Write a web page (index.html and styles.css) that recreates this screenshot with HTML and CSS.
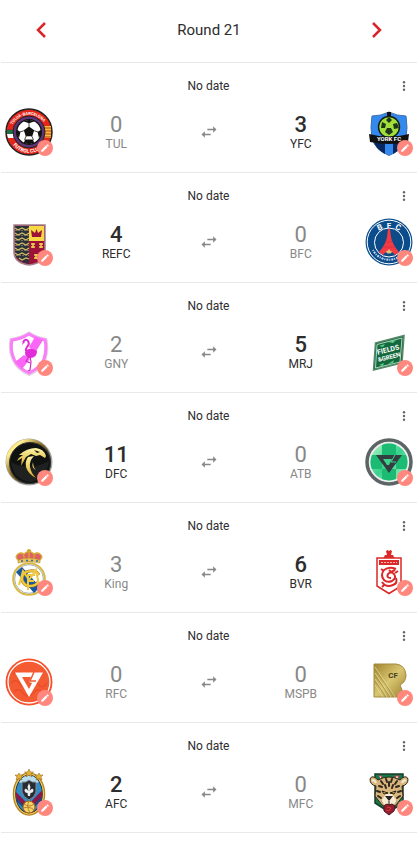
FILE: index.html
```html
<!DOCTYPE html>
<html lang="en">

<head>
    <meta charset="utf-8">
    <meta name="viewport" content="width=device-width, initial-scale=1">
    <title>Round 21</title>
    <link rel="stylesheet" href="styles.css">
</head>

<body>
    <!-- shared icons -->
    <svg class="sprite" aria-hidden="true">
        <symbol id="i-pen" viewBox="0 0 24 24">
            <path d="M3 17.2V21h3.800L17.800 9.900 14.100 6.200zM20.700 7a1 1 0 0 0 0-1.400l-2.300-2.300a1 1 0 0 0-1.400 0l-1.800 1.800 3.700 3.700z" />
        </symbol>
        <symbol id="i-more" viewBox="0 0 16 16">
            <circle cx="8" cy="4.300" r="1.200" />
            <circle cx="8" cy="8" r="1.200" />
            <circle cx="8" cy="11.700" r="1.200" />
        </symbol>
        <symbol id="i-swap" viewBox="0 0 24 24">
            <path d="M7 11 3 15l4 4v-3h7v-2H7zM21 9l-4-4v3h-7v2h7v3z" />
        </symbol>
        <symbol id="i-ball" viewBox="0 0 20 20">
            <circle cx="10" cy="10" r="9.500" fill="#fff" stroke="#111" />
            <path d="M10 5.800l4 2.900-1.500 4.600h-5L6 8.700zM5.500 1.800 10 3.200l4.500-1.400L10 .5zM.6 8l2.800 2-1 4.500L.6 12zM19.400 8l-2.800 2 1 4.500 1.800-2.500zM6 18.500l1-2.700h6l1 2.700-4 1z" fill="#111" />
            <path d="M10 6V3M6 9 3 10M14 9l3 1M8 13l-1.500 3M12 13l1.500 3" stroke="#333" stroke-width=".7" />
        </symbol>
    </svg>

    <main class="fixtures">
        <header class="round-nav">
            <button type="button" class="nav-btn" aria-label="Previous round">
                <svg viewBox="0 0 24 24"><path d="M16 5 9 12l7 7" /></svg>
            </button>
            <h1 class="round-title">Round 21</h1>
            <button type="button" class="nav-btn" aria-label="Next round">
                <svg viewBox="0 0 24 24"><path d="M8 5l7 7-7 7" /></svg>
            </button>
        </header>

        <section class="match">
            <div class="match-head">
                <span class="match-date">No date</span>
                <button type="button" class="more-btn" aria-label="Options"><svg><use href="#i-more" /></svg></button>
            </div>
            <div class="match-row">
                <button type="button" class="crest" aria-label="Edit TUL">
                    <svg class="logo" viewBox="0 0 48 48">
                        <circle cx="24" cy="24" r="23" fill="#e62518" stroke="#222" stroke-width="1.500" />
                        <path d="M2 21h9v3H2z" fill="#b32622" /><path d="M2 22h9v4H2z" fill="#187245" /><path d="M2 26h10v4H3z" fill="#fff" />
                        <path d="M37 18h9v12h-9z" fill="#f5bf35" />
                        <path d="M38 20h8M38 23h8M38 26h8M38 29h8" stroke="#c73525" />
                        <circle cx="24" cy="24" r="16" fill="#5d3475" stroke="#222" />
                        <use href="#i-ball" x="11" y="11" width="26" height="26" />
                        <path id="tul-top" d="M6 21a18.500 18.500 0 0 1 36 0" fill="none" />
                        <path id="tul-bottom" d="M5 32a20.500 20.500 0 0 0 38 0" fill="none" />
                        <text class="ring-text" font-size="4"><textPath href="#tul-top" startOffset="9%">TULUA-BARCELONA</textPath></text>
                        <text class="ring-text" font-size="5"><textPath href="#tul-bottom" startOffset="12%">FUTBOL CLUB</textPath></text>
                    </svg>
                    <span class="edit"><svg><use href="#i-pen" /></svg></span>
                </button>
                <div class="team"><span class="score">0</span><span class="name">TUL</span></div>
                <svg class="swap"><use href="#i-swap" /></svg>
                <div class="team win"><span class="score">3</span><span class="name">YFC</span></div>
                <button type="button" class="crest" aria-label="Edit YFC">
                    <svg class="logo" viewBox="0 0 48 48">
                        <path d="M7 8q9 0 17-4 8 4 17 4 2 12 0 22-3 12-17 17.500Q10 42 7 30 5 20 7 8z" fill="#3489ee" stroke="#3d6fae" />
                        <path d="M8 31l12-1v16Q10 41 8 31zM28 30l12 1q-2 10-12 15z" fill="#092761" />
                        <path d="M22 4h4v6h-4z" fill="#111" />
                        <circle cx="24" cy="19" r="10.500" fill="#a3df3b" stroke="#172018" stroke-width="1.500" />
                        <path d="M24 9l3 3-3 3-3-3zM17 14l4 2-1 4-4 0zM28 16l4-1 2 5-5 1zM22 20h4l2 4-4 3-4-3z" fill="#1d3719" />
                        <path d="M4 26q20 5 40 0l-1 8q-19 4-38 0z" fill="#111" />
                        <text x="24" y="33" class="mark" font-size="6" fill="#fff">YORK FC</text>
                    </svg>
                    <span class="edit"><svg><use href="#i-pen" /></svg></span>
                </button>
            </div>
        </section>

        <section class="match">
            <div class="match-head">
                <span class="match-date">No date</span>
                <button type="button" class="more-btn" aria-label="Options"><svg><use href="#i-more" /></svg></button>
            </div>
            <div class="match-row">
                <button type="button" class="crest" aria-label="Edit REFC">
                    <svg class="logo" viewBox="0 0 48 48">
                        <path d="M9 7h31v27q0 11-16 13Q9 45 9 34z" fill="#9c1238" stroke="#a5808c" stroke-width="1.500" />
                        <path d="M24 8h15v15H24z" fill="#f8d943" />
                        <path d="M10 8h14v38q-14-3-14-12z" fill="#293238" />
                        <path d="M10 10l3 2 4-2 4 2 3-2M10 15l3 2 4-2 4 2 3-2M10 20l3 2 4-2 4 2 3-2M10 25l3 2 4-2 4 2 3-2M10 30l3 2 4-2 4 2 3-2M10 35l3 2 4-2 4 2 3-2M14 40l3 2 4-2 3 1" fill="none" stroke="#d3bb68" stroke-width="1.300" />
                        <path d="M10 12.500h14M10 17.500h14M10 22.500h14M10 27.500h14M10 32.500h14M11 37.500h13" stroke="#8c8064" stroke-dasharray="2 1" stroke-width=".8" />
                        <path d="M27 19l-1-7 4 3 1.500-4 1.500 4 4-3-1 7z" fill="#9c1238" />
                        <path d="M26 26h4M28 25v5M26 29h4M34 26h4M36 25v5M34 29h4M29 37h4M31 36v5M29 40h4" stroke="#eed54a" stroke-width="1.500" />
                    </svg>
                    <span class="edit"><svg><use href="#i-pen" /></svg></span>
                </button>
                <div class="team win"><span class="score">4</span><span class="name">REFC</span></div>
                <svg class="swap"><use href="#i-swap" /></svg>
                <div class="team"><span class="score">0</span><span class="name">BFC</span></div>
                <button type="button" class="crest" aria-label="Edit BFC">
                    <svg class="logo" viewBox="0 0 48 48">
                        <circle cx="24" cy="24" r="23.500" fill="#0b4d8c" />
                        <circle cx="24" cy="24" r="21.800" fill="none" stroke="#fff" />
                        <circle cx="24" cy="24.500" r="14.500" fill="#0c4b88" stroke="#fff" />
                        <path d="M23 11h2l1 8q1 7 8 15l-4 3q-6-8-12 0l-4-3q7-8 8-15z" fill="#f43b45" />
                        <path d="M20 24h8M18 29h12" stroke="#d93045" />
                        <path d="M24 31l1.500 2 2 .5-2 2h-3l-2-2 2-.5z" fill="#e3c277" />
                        <text x="15" y="12" class="mark" font-size="8" fill="#fff" transform="rotate(-24 15 10)">B</text>
                        <text x="24" y="9.500" class="mark" font-size="8" fill="#fff">F</text>
                        <text x="33" y="12" class="mark" font-size="8" fill="#fff" transform="rotate(24 33 10)">C</text>
                        <path d="M8 32a18 18 0 0 0 32 0" fill="none" stroke="#cbd9ec" stroke-width="2" stroke-dasharray="1 1 2 1" />
                    </svg>
                    <span class="edit"><svg><use href="#i-pen" /></svg></span>
                </button>
            </div>
        </section>

        <section class="match">
            <div class="match-head">
                <span class="match-date">No date</span>
                <button type="button" class="more-btn" aria-label="Options"><svg><use href="#i-more" /></svg></button>
            </div>
            <div class="match-row">
                <button type="button" class="crest" aria-label="Edit GNY">
                    <svg class="logo" viewBox="0 0 48 48">
                        <path d="M24 5q8 5 17 6.500 2 10-1 20-4 10-16 15Q12 41 8 31.500 4 22 6 11.500 16 10 24 5z" fill="#fff" stroke="#e3cfe3" stroke-width="3" />
                        <path d="M24 6q8 5 16 6 2 9-1 19-4 9-15 14Q13 40 9 31 5 22 7 12q9-1 17-6z" fill="#fff" stroke="#fb7df8" stroke-width="3" />
                        <path d="M30 9l8 3-8 13-6-6zM19 27l6 4-8 10-7-7z" fill="#fa66f5" />
                        <path d="M18 14q3-4 5-1 2 3-1 6-3 4 2 6" fill="none" stroke="#e22bd9" stroke-width="2" />
                        <path d="M18 13l-1 4 3-3zM20 24q4-6 12-1 0 7-7 7-5 0-5-6z" fill="#e22bd9" />
                        <path d="M25 28l1 6-1 8-2 1M24 29l-3 4 4 2" fill="none" stroke="#d32bc9" stroke-width="1.200" />
                    </svg>
                    <span class="edit"><svg><use href="#i-pen" /></svg></span>
                </button>
                <div class="team"><span class="score">2</span><span class="name">GNY</span></div>
                <svg class="swap"><use href="#i-swap" /></svg>
                <div class="team win"><span class="score">5</span><span class="name">MRJ</span></div>
                <button type="button" class="crest" aria-label="Edit MRJ">
                    <svg class="logo" viewBox="0 0 48 48">
                        <path d="M10.500 15 39 7.500 37 35 8.500 42z" fill="#13683d" stroke="#568968" stroke-width="1.500" />
                        <path d="M12 16.500l25-6.500-2 24-24.500 6z" fill="none" stroke="#d7eee0" stroke-width=".8" />
                        <path d="M14 18l6-2-2 3M23 14l8-2-3 3zM14 37l5-2-1 3zM23 36l6-4-1 3z" fill="#5bcf85" />
                        <g transform="rotate(-14 24 25)">
                            <text x="24" y="24" class="mark" font-size="7" fill="#fff">FIELDS</text>
                            <text x="23" y="31" class="mark" font-size="6" fill="#fff">&amp;GREEN</text>
                        </g>
                    </svg>
                    <span class="edit"><svg><use href="#i-pen" /></svg></span>
                </button>
            </div>
        </section>

        <section class="match">
            <div class="match-head">
                <span class="match-date">No date</span>
                <button type="button" class="more-btn" aria-label="Options"><svg><use href="#i-more" /></svg></button>
            </div>
            <div class="match-row">
                <button type="button" class="crest" aria-label="Edit DFC">
                    <svg class="logo" viewBox="0 0 48 48">
                        <defs>
                            <linearGradient id="rim" x1="0" y1="0" x2="1" y2="1">
                                <stop offset="0" stop-color="#e9bd25" /><stop offset=".2" stop-color="#ffef93" /><stop offset=".45" stop-color="#8a6a1c" /><stop offset=".7" stop-color="#333" /><stop offset="1" stop-color="#e0cc77" />
                            </linearGradient>
                            <linearGradient id="gold" x1="0" y1="0" x2="0" y2="1">
                                <stop offset="0" stop-color="#fff6a8" /><stop offset="1" stop-color="#d8a923" />
                            </linearGradient>
                        </defs>
                        <circle cx="24" cy="24" r="23.500" fill="#a6a6a2" />
                        <circle cx="23.500" cy="23.500" r="22.500" fill="url(#rim)" />
                        <circle cx="25" cy="25" r="20.500" fill="#101111" stroke="#333" />
                        <path d="M6 24q18 10 38-1-2 17-18 21Q8 42 6 24z" fill="#292b2c" opacity=".6" />
                        <path d="M14 17q8-7 17-7 8 1 10 8l-1 2-5-3-4 1-5-2-5 3-5 9 1-8-5 3q2-4 6-6z" fill="url(#gold)" />
                        <path d="M23 19l6-1q-5 5-4 11 1 6 6 11-8-4-10-11-1-6 2-10zM28 24q0 5 3 8-5-2-3-8z" fill="url(#gold)" />
                        <path d="M29 12l6 2-3 1z" fill="#111" />
                    </svg>
                    <span class="edit"><svg><use href="#i-pen" /></svg></span>
                </button>
                <div class="team win"><span class="score">11</span><span class="name">DFC</span></div>
                <svg class="swap"><use href="#i-swap" /></svg>
                <div class="team"><span class="score">0</span><span class="name">ATB</span></div>
                <button type="button" class="crest" aria-label="Edit ATB">
                    <svg class="logo" viewBox="0 0 48 48">
                        <defs>
                            <clipPath id="atb-clip"><circle cx="24" cy="24" r="18.500" /></clipPath>
                            <linearGradient id="mint" x1="0" y1="0" x2="1" y2="1">
                                <stop offset="0" stop-color="#c5f7cd" /><stop offset=".5" stop-color="#38d28c" /><stop offset="1" stop-color="#b7f4cb" />
                            </linearGradient>
                        </defs>
                        <circle cx="24" cy="24" r="22" fill="#eee" stroke="#5d6466" stroke-width="3.500" />
                        <g clip-path="url(#atb-clip)">
                            <path d="M4 4h40v40H4z" fill="url(#mint)" />
                            <path d="M17 4h14v13H17zM4 17h13v14H4zM31 17h13v14H31zM17 31h14v13H17z" fill="#1cbb74" />
                        </g>
                        <path d="M11 17h26L24 35z" fill="#343d40" />
                        <path d="M18 21h9l-3 6-2 0z" fill="#3fd28e" />
                        <path d="M30 17l-4 7h5" fill="none" stroke="#3fd28e" />
                    </svg>
                    <span class="edit"><svg><use href="#i-pen" /></svg></span>
                </button>
            </div>
        </section>

        <section class="match">
            <div class="match-head">
                <span class="match-date">No date</span>
                <button type="button" class="more-btn" aria-label="Options"><svg><use href="#i-more" /></svg></button>
            </div>
            <div class="match-row">
                <button type="button" class="crest" aria-label="Edit King">
                    <svg class="logo" viewBox="0 0 48 48">
                        <circle cx="24" cy="31" r="15.800" fill="#fff" stroke="#d9b743" stroke-width="2" />
                        <circle cx="24" cy="31" r="14.300" fill="none" stroke="#6e8a91" stroke-width=".6" />
                        <path d="M11 24l6-5 18 20-6 6z" fill="#1757a0" />
                        <path d="M34 27q-3-5-9-4-8 1-8 8 1 7 8 7 6 0 8-4" fill="none" stroke="#9a7a20" stroke-width="3" />
                        <path d="M34 27q-3-5-9-4-8 1-8 8 1 7 8 7 6 0 8-4M14 37l4-14 6 9 7-10 3 15M23 42V27h7M23 33h6" fill="none" stroke="#efc83e" stroke-width="2" />
                        <path d="M14 13q-5-4-1-7 3-2 6 0 5-5 10 0 3-2 6 0 4 3-1 7z" fill="#e0606a" stroke="#d6ad35" stroke-width="1.500" />
                        <path d="M24 1v4M22 2.500h4M24 5v8M18 6l2 6M30 6l-2 6" stroke="#d3a32c" stroke-width="1.500" />
                        <path d="M13 12q11-4 22 0v3q-11-3-22 0z" fill="#ecc552" stroke="#aa7d2b" stroke-width=".5" />
                        <path d="M16 13h2M21 12.500h2M26 12.500h2M31 13h2" stroke="#316fac" stroke-width="1.500" />
                    </svg>
                    <span class="edit"><svg><use href="#i-pen" /></svg></span>
                </button>
                <div class="team"><span class="score">3</span><span class="name">King</span></div>
                <svg class="swap"><use href="#i-swap" /></svg>
                <div class="team win"><span class="score">6</span><span class="name">BVR</span></div>
                <button type="button" class="crest" aria-label="Edit BVR">
                    <svg class="logo" viewBox="0 0 48 48">
                        <path d="M21 3l1.500-1 1.500 1 1.500-1L27 3l-1 4h-4zM20 7h8l2 4H18z" fill="#db2828" />
                        <path d="M12 10h24v28l-12 7.500L12 38z" fill="#fff" stroke="#db2828" stroke-width="1.500" />
                        <path d="M14 12h20v5H14z" fill="#db2828" />
                        <path d="M16 14.500h16" stroke="#ffb6a4" stroke-dasharray="2 1" />
                        <path d="M31 21q-7-3-12 1-4 5 0 10 3 3 8 1 5-3 2-7-3-3-6 0-2 4 3 4M17 34q4 6 11 3 5-2 3-7M19 23l-3-2M30 25l3-2M20 36l-3 3M24 22l2 2 4-2" fill="none" stroke="#db2828" stroke-width="2" />
                    </svg>
                    <span class="edit"><svg><use href="#i-pen" /></svg></span>
                </button>
            </div>
        </section>

        <section class="match">
            <div class="match-head">
                <span class="match-date">No date</span>
                <button type="button" class="more-btn" aria-label="Options"><svg><use href="#i-more" /></svg></button>
            </div>
            <div class="match-row">
                <button type="button" class="crest" aria-label="Edit RFC">
                    <svg class="logo" viewBox="0 0 48 48">
                        <circle cx="24" cy="24" r="23.500" fill="#f4512c" />
                        <circle cx="24" cy="24" r="21" fill="#f45b32" stroke="#fff" stroke-width="1.300" />
                        <path d="M6 25q5-5 9 1t9 0 9 0 9-1M9 34q5-5 9 1t10 0 8-1M8 16q5-4 9 0" fill="none" stroke="#e54826" stroke-width="1.500" opacity=".7" />
                        <path d="M10 14.500h28L24 39z" fill="#fff" />
                        <path d="M17 19h9l-2 5 3 1-3 6z" fill="#f45b32" />
                        <path d="M29 14l-4 9h6" fill="none" stroke="#f45b32" stroke-width="1.500" />
                    </svg>
                    <span class="edit"><svg><use href="#i-pen" /></svg></span>
                </button>
                <div class="team"><span class="score">0</span><span class="name">RFC</span></div>
                <svg class="swap"><use href="#i-swap" /></svg>
                <div class="team"><span class="score">0</span><span class="name">MSPB</span></div>
                <button type="button" class="crest" aria-label="Edit MSPB">
                    <svg class="logo" viewBox="0 0 48 48">
                        <defs>
                            <linearGradient id="brass" x1="0" y1="0" x2="1" y2="1">
                                <stop offset="0" stop-color="#a2842f" /><stop offset=".5" stop-color="#d9c671" /><stop offset="1" stop-color="#9c8030" />
                            </linearGradient>
                        </defs>
                        <path d="M9 6h22q9 1 10 11 0 7-6 10l5 12H9z" fill="url(#brass)" stroke="#a48b3d" />
                        <path d="M10 9l20 30M10 15l16 24M10 21l12 18M10 27l8 12" stroke="#e6d992" stroke-width=".8" />
                        <path d="M10 11l19 28M10 17l15 22M10 23l11 16" stroke="#9a863e" stroke-width=".7" />
                        <text x="28" y="20" class="mark" font-size="8" fill="#463e20">CF</text>
                    </svg>
                    <span class="edit"><svg><use href="#i-pen" /></svg></span>
                </button>
            </div>
        </section>

        <section class="match">
            <div class="match-head">
                <span class="match-date">No date</span>
                <button type="button" class="more-btn" aria-label="Options"><svg><use href="#i-more" /></svg></button>
            </div>
            <div class="match-row">
                <button type="button" class="crest" aria-label="Edit AFC">
                    <svg class="logo" viewBox="0 0 48 48">
                        <defs>
                            <clipPath id="afc-clip"><ellipse cx="24" cy="26" rx="13" ry="18.500" /></clipPath>
                        </defs>
                        <ellipse cx="24" cy="26" rx="15" ry="20.500" fill="#1b2b4a" stroke="#b98320" stroke-width="2.500" />
                        <ellipse cx="24" cy="26" rx="14.500" ry="20" fill="none" stroke="#f3d36d" />
                        <g clip-path="url(#afc-clip)">
                            <path d="M9 6h30v40H9z" fill="#318cc4" />
                            <path d="M9 22l16 16v7L9 31zM39 20 23 37v7l16-14zM9 38l12 8H9zM39 37 27 46h12z" fill="#8d1746" />
                            <path d="M9 29l14 14M39 28 25 42" stroke="#184b88" stroke-width="2" />
                            <ellipse cx="24" cy="11" rx="13" ry="5" fill="#b9dff0" />
                        </g>
                        <path d="M17 14q4 1 7-2 3 3 7 2v10q-1 5-7 8-6-3-7-8z" fill="#292b32" stroke="#808992" />
                        <path d="M24 15l1.500 4-1 4q3-4 4-1 0 3-3 3l-.5 3h-2l-.5-3q-3 0-3-3 1-3 4 1l-1-4z" fill="#eee" />
                        <circle cx="24" cy="39" r="6" fill="#f6d268" stroke="#9d6414" />
                        <path d="M19 36q5 4 10 0M18 40q7-2 11 2M24 33q-3 5 1 12" fill="none" stroke="#b68025" />
                        <path d="M24 1l1.500 3h3L26 6l1 3-3-2-3 2 1-3-2.500-2h3zM14 5l1 2h3l-2 2 1 3-3-1.500-3 1.500 1-3-2-2h3zM34 5l1 2h3l-2 2 1 3-3-1.500-3 1.500 1-3-2-2h3z" fill="#e5b133" stroke="#8b5d18" stroke-width=".5" />
                    </svg>
                    <span class="edit"><svg><use href="#i-pen" /></svg></span>
                </button>
                <div class="team win"><span class="score">2</span><span class="name">AFC</span></div>
                <svg class="swap"><use href="#i-swap" /></svg>
                <div class="team"><span class="score">0</span><span class="name">MFC</span></div>
                <button type="button" class="crest" aria-label="Edit MFC">
                    <svg class="logo" viewBox="0 0 48 48">
                        <path d="M10 6h28v29l-14 9-14-9z" fill="#16794b" stroke="#173d2b" stroke-width="1.500" />
                        <path d="M14 8h3l-1 3M30 8h4l-2 4z" fill="#fff" stroke="#d7333d" />
                        <path d="M13 12q-6-6-8-1 0 6 6 7l-1 10 7 9 7 4 7-4 7-9-1-10q6-1 6-7-2-5-8 1-11-6-22 0z" fill="#d8b57c" stroke="#302819" />
                        <path d="M7 13q2-2 4 2M41 13q-2-2-4 2" fill="none" stroke="#f3ead6" stroke-width="2" />
                        <path d="M16 13l2 3M21 11l1 3M27 11l-1 3M32 13l-2 3M14 18l3 1M34 18l-3 1M20 17l1 3M28 17l-1 3M12 23l3 1M36 23l-3 1M13 28l3 2M35 28l-3 2M24 14v4M17 33l2 1M31 33l-2 1" stroke="#30271e" stroke-width="2" stroke-linecap="round" />
                        <path d="M17 23l6 2-4 1zM31 23l-6 2 4 1z" fill="#e5d15b" stroke="#221f17" />
                        <path d="M21 26h6l5 7-5 5h-6l-5-5z" fill="#f6ead2" />
                        <path d="M20 28h8l-4 5z" fill="#25221f" />
                        <path d="M24 33v4M20 37h8" stroke="#25221f" />
                        <path d="M19 38l3-2 2 1 3-1 3 2-1 5-5 4-5-4z" fill="#941d2c" stroke="#4d1821" />
                        <path d="M22 39l4 1-2 3-3-1" fill="none" stroke="#dd3840" />
                    </svg>
                    <span class="edit"><svg><use href="#i-pen" /></svg></span>
                </button>
            </div>
        </section>
    </main>
</body>

</html>
```
FILE: styles.css
```css
* {
    box-sizing: border-box;
}

body {
    margin: 0;
    background: #fff;
    color: #2d2d2d;
    font-family: Roboto, "Liberation Sans", sans-serif;
}

button {
    padding: 0;
    border: 0;
    background: none;
    cursor: pointer;
}

svg {
    display: block;
}

.sprite {
    display: none;
}

.fixtures {
    margin: 0 1px;
}

.round-nav {
    display: flex;
    align-items: center;
    justify-content: space-between;
    padding: 18px 28px 20px;
    border-bottom: 1px solid #e8e8e8;
}

.nav-btn svg {
    width: 24px;
    height: 24px;
    fill: none;
    stroke: #d9252a;
    stroke-width: 2.5;
}

.round-title {
    margin: 0;
    font-size: 15px;
    line-height: 24px;
    font-weight: 400;
}

.match {
    padding: 15px 4px 16px;
    border-bottom: 1px solid #e8e8e8;
}

.match-head {
    display: grid;
    grid-template-columns: 16px 1fr 16px;
    align-items: center;
    padding-right: 1px;
}

.match-date {
    grid-column: 2;
    text-align: center;
    font-size: 12px;
    line-height: 16px;
}

.more-btn svg {
    width: 16px;
    height: 16px;
    fill: #666;
}

.match-row {
    display: grid;
    grid-template-columns: 49px 1fr 60px 1fr 50px;
    align-items: center;
    padding-top: 14px;
}

.crest {
    position: relative;
    width: 48px;
    height: 48px;
}

.crest:last-child {
    justify-self: end;
}

.logo {
    width: 48px;
    height: 48px;
}

.edit {
    position: absolute;
    right: 0;
    bottom: 0;
    display: flex;
    align-items: center;
    justify-content: center;
    width: 16px;
    height: 16px;
    border-radius: 50%;
    background: #ff877d;
}

.edit svg {
    width: 10px;
    height: 10px;
    fill: #fff;
}

.team {
    display: flex;
    flex-direction: column;
    align-items: center;
    padding-top: 2px;
    color: #888;
}

.score {
    font-size: 22px;
    line-height: 22px;
}

.name {
    font-size: 12px;
    line-height: 16px;
}

.win {
    color: #2d2d2d;
}

.win .score {
    font-weight: 500;
}

.swap {
    justify-self: center;
    width: 20px;
    height: 20px;
    fill: #888;
}

.ring-text,
.mark {
    font-family: Roboto, "Liberation Sans", sans-serif;
    font-weight: 700;
}

.ring-text {
    fill: #fff;
}

.mark {
    text-anchor: middle;
}
```
